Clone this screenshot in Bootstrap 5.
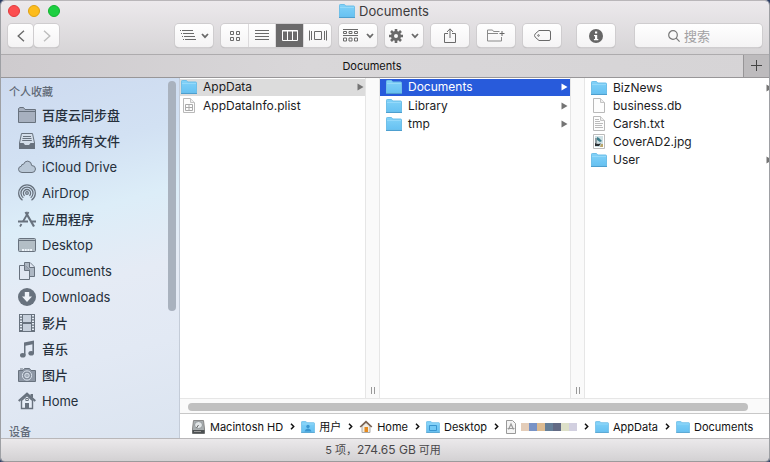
<!DOCTYPE html>
<html lang="zh-CN">
<head>
<meta charset="utf-8">
<meta name="viewport" content="width=device-width, initial-scale=1">
<title>Documents</title>
<link href="https://cdn.jsdelivr.net/npm/bootstrap@5.3.0/dist/css/bootstrap.min.css" rel="stylesheet">
<style>
body{font-family:Inter,"Noto Sans CJK SC",sans-serif;font-size:12px;line-height:18px;color:#1c1c1e;background:#2c3e66}
a{color:inherit;text-decoration:none}
svg{display:block;flex:none}
.finder{height:100vh;border-radius:5px 5px 4px 4px;border-top:1px solid #b9b6b9;border-left:1px solid #9ea0a4;border-right:1px solid #9ea0a4}
.chrome{background:linear-gradient(#ece9ec,#d6d4d6);border-bottom:1px solid #adabad}
.titlerow{display:grid;grid-template-columns:1fr auto 1fr;height:20px;padding:0 9px 0 7px}
.titletext{font-size:13px;color:#3c3a3c}
.light{width:12px;height:12px;border-radius:50%;border:1px solid;padding:0}
.light-r{background:#fc4e50;border-color:#e0393d}
.light-y{background:#fdbc1c;border-color:#dea012}
.light-g{background:#1dcf41;border-color:#11b32f}
.toolrow{padding:3px 7px 7px 7px}
.navpair{gap:1px;margin-right:108px}
.tool{width:38px;height:23px;padding:0;border:0;border-radius:4px;background:linear-gradient(#fff,#f4f3f4);box-shadow:0 0 0 1px #cfcdcf,0 1px 1px #a9a7a9;color:#6a6a6a;display:flex;align-items:center;justify-content:center;flex:none}
.nav-tool{width:25px}
.seg{border-radius:4px;box-shadow:0 0 0 1px #cfcdcf,0 1px 1px #a9a7a9;overflow:hidden}
.seg .tool{width:28px;border-radius:0;box-shadow:none;border-right:1px solid #dcdadc}
.seg .tool:nth-child(2),.seg .tool:last-child{width:27px}
.seg .tool:last-child{border-right:0}
.seg .tool.active{background:#6b6a6b;color:#fff}
.findbox{flex:0 0 127px;justify-content:flex-start;padding-left:33px}
.findbox input{border:0;background:none;outline:0;width:60px;padding:0;font-size:13px;line-height:18px;color:#555}
.findbox input::placeholder{color:#a2a1a3;opacity:1}
.tabrow{height:23px;background:linear-gradient(90deg,#cecbce,#d9d7d9 40%,#d6d4d6);border-bottom:1px solid #989698;font-size:11px;color:#111}
.tabrow .newtab{width:26px;border:0;border-left:1px solid #979597;background:#bdbbbd;color:#444;padding:0}
.side{width:179px;border-right:1px solid #c4ccd8;background:linear-gradient(165deg,#cddaef 0,#d2e1f3 22%,#dcedf8 38%,#e5ebf5 56%,#e2e9f4 75%,#dbe4f0 100%);color:#26303c;overflow:hidden}
.side h2{font-size:11px;line-height:18px;font-weight:500;color:#5f6976;margin:0;padding:5px 8px 0}
.side ul{margin:1px 0 4px}
.side li a{display:flex;align-items:center;height:26px;padding-left:17px;gap:6px;font-size:13px}
.side li a:lang(zh){font-weight:500}
.side svg{color:#68727e}
.vthumb{width:8px;height:230px;margin:3px 3px 0 0;border-radius:4px;background:#a9b2be}
.pane{flex:0 0 190px;padding-top:1px;background:#fff}
.pane-first{flex-basis:185px}
.pane-last{flex-grow:1}
.pane li a{display:flex;align-items:center;height:18px;padding:0 2px 0 6px;gap:6px}
.pane-first li a{padding:0 1px}
.pane li .arr{margin-left:auto;color:#747474}
.pane li.sel a{background:#dcdcdc;height:17px;margin-bottom:1px}
.pane li.hot a{background:#285bdb;color:#fff;height:17px;margin-bottom:1px}
.pane li.hot .arr{color:#fff}
.rail{width:15px;flex:none;background:#fafafa;border:solid #e6e6e6;border-width:0 1px;display:flex;align-items:flex-end;justify-content:center;gap:2px;padding-bottom:4px}
.rail i{width:1px;height:7px;background:#999}
.hbar{height:16px;background:#fafafa;border-top:1px solid #e6e6e6;border-bottom:1px solid #c8c8c8;padding:4px 21px 0 8px}
.hbar div{height:8px;border-radius:4px;background:#c0c0c0}
.trail{height:24px;font-size:11px;color:#111;padding:1px 0 0 11px;background:#fff;white-space:nowrap}
.trail a{display:flex;align-items:center;gap:4px}
.trail .sep{width:18px;display:flex;justify-content:center}
.redact{display:flex;height:8px}
.redact i{width:8px}
.status{height:24px;background:linear-gradient(#ebe9eb,#d3d1d3);border-top:1px solid #b9b7b9;border-bottom:1px solid #9c9a9c;font-size:11px;color:#4a484a;border-radius:0 0 4px 4px;padding-right:4px}
.status span{font-size:12px}
</style>
<script src="https://cdn.jsdelivr.net/npm/bootstrap@5.3.0/dist/js/bootstrap.bundle.min.js"></script>
</head>
<body>
<svg width="0" height="0" class="position-absolute" aria-hidden="true">
<defs>
<linearGradient id="fg" x1="0" y1="0" x2="0" y2="1"><stop offset="0" stop-color="#82d2f8"/><stop offset="1" stop-color="#66c1f2"/></linearGradient>
<symbol id="folder" viewBox="0 0 16 14"><path d="M.5 13V1.2Q.5.5 1.2.5H5.200Q5.800.5 6.200 1.200L6.600 2H14.800Q15.500 2 15.500 2.700V13Z" fill="url(#fg)" stroke="#6fbfe8"/><path d="M1 3.500H15" stroke="#94d9fa"/><path d="M0 13.500H16" stroke="#4d9fcf"/></symbol>
<symbol id="page" viewBox="0 0 12 15"><path d="M.5.5H7.500L11.500 4.500V14.500H.5Z" fill="#fdfdfd" stroke="#b9b9b9"/><path d="M7.500.5V4.500H11.500" fill="#eee" stroke="#c4c4c4"/></symbol>
<symbol id="arrow" viewBox="0 0 7 8"><path d="M.5.5 6.500 4 .5 7.500Z" fill="currentColor"/></symbol>
<symbol id="chev" viewBox="0 0 8 6"><path d="M1 1 4 4.200 7 1" fill="none" stroke="currentColor" stroke-width="1.800"/></symbol>
<symbol id="sep" viewBox="0 0 5 7"><path d="M1 .8 3.700 3.500 1 6.200" fill="none" stroke="#111" stroke-width="1.500"/></symbol>
</defs>
</svg>
<div class="finder d-flex flex-column overflow-hidden">
<header class="chrome">
<div class="titlerow align-items-center">
<div class="d-flex gap-2">
<button class="light light-r" aria-label="关闭"></button><button class="light light-y" aria-label="最小化"></button><button class="light light-g" aria-label="缩放"></button>
</div>
<div class="titletext d-flex align-items-center gap-1"><svg width="16" height="14"><use href="#folder"/></svg>Documents</div>
<div></div>
</div>
<div class="toolrow d-flex gap-2">
<div class="navpair d-flex">
<button class="tool nav-tool" aria-label="后退"><svg width="8" height="12" viewBox="0 0 8 12"><path d="M7 .7 1.200 6 7 11.300" fill="none" stroke="#6b6b6b" stroke-width="1.400"/></svg></button>
<button class="tool nav-tool" aria-label="前进"><svg width="8" height="12" viewBox="0 0 8 12"><path d="M1 .7 6.800 6 1 11.300" fill="none" stroke="#bdbdbd" stroke-width="1.400"/></svg></button>
</div>
<button class="tool gap-1" aria-label="列表选项"><svg width="17" height="11" viewBox="0 0 17 11" fill="none" stroke="currentColor"><path d="M0 .5H1M2 .5H13M1 3.500H2M3 3.500H14M2 6.500H3M4 6.500H15M3 9.500H4M5 9.500H16"/></svg><svg width="8" height="6"><use href="#chev"/></svg></button>
<div class="seg d-flex" role="group" aria-label="显示方式">
<button class="tool" aria-label="图标"><svg width="10" height="10" viewBox="0 0 10 10" fill="none" stroke="currentColor"><path d="M.5.5h3v3h-3zM6.500.5h3v3h-3zM.5 6.500h3v3h-3zM6.500 6.500h3v3h-3z"/></svg></button>
<button class="tool" aria-label="列表"><svg width="14" height="11" viewBox="0 0 14 11" stroke="currentColor"><path d="M0 .5H14M0 3.500H14M0 6.500H14M0 9.500H14"/></svg></button>
<button class="tool active" aria-label="分栏"><svg width="16" height="11" viewBox="0 0 16 11" fill="none" stroke="currentColor"><path d="M.5.5h15v10H.5zM5.500.5v10M10.500.5v10"/><path d="M0 1H16"/></svg></button>
<button class="tool" aria-label="画廊"><svg width="18" height="11" viewBox="0 0 18 11" fill="none" stroke="currentColor"><path d="M5.500 1.500h7v8h-7zM.5.500v10M2.500 1v9M17.500.500v10M15.500 1v9"/></svg></button>
</div>
<button class="tool gap-2" aria-label="排列"><svg width="15" height="13" viewBox="0 0 15 13" fill="none" stroke="currentColor"><path d="M0 .5H15M0 6.500H15M.5 2.500h3v2h-3zM6 2.500h3v2H6zM11.500 2.500h3v2h-3zM.5 9h3v3h-3zM6 9h3v3H6zM11.500 9h3v3h-3z"/></svg><svg width="8" height="6"><use href="#chev"/></svg></button>
<button class="tool gap-2" aria-label="操作"><svg width="14" height="14" viewBox="-7 -7 14 14"><circle r="3.500" fill="none" stroke="currentColor" stroke-width="3"/><path d="M0-7V-4M0 4V7M-7 0H-4M4 0H7M-5-5-3-3M3 3 5 5M-5 5-3 3M3-3 5-5" stroke="currentColor" stroke-width="2.600"/></svg><svg width="8" height="6"><use href="#chev"/></svg></button>
<button class="tool" aria-label="共享"><svg width="12" height="16" viewBox="0 0 12 16" fill="none" stroke="currentColor"><path d="M4 5.500H.5v9h11v-9H8M6 10V1M3 4 6 .8 9 4"/></svg></button>
<button class="tool" aria-label="新建文件夹"><svg width="18" height="13" viewBox="0 0 18 13" fill="none" stroke="#8a8a8a"><path d="M12.500 2.500H6.500L5.500 1H.5v11h14V8M.5 4.500H11"/><path d="M15 2v5M12.500 4.500h5" stroke="#666"/></svg></button>
<button class="tool" aria-label="标记"><svg width="17" height="11" viewBox="0 0 17 11" fill="none" stroke="currentColor"><path d="M5 .5H15Q16.500.5 16.500 2V9Q16.500 10.500 15 10.500H5L1.200 7.200Q-.2 5.500 1.200 3.800Z"/><circle cx="4.500" cy="5.500" r=".8"/></svg></button>
<button class="tool ms-2" aria-label="信息"><svg width="14" height="14" viewBox="0 0 14 14"><circle cx="7" cy="7" r="7" fill="#666"/><path d="M6 2.500h2.200v2H6zM5 6H8.200V10H9.300V11.200H4.900V10H6V7.200H5z" fill="#fff"/></svg></button>
<label class="tool findbox gap-1 ms-auto"><svg width="12" height="12" viewBox="0 0 12 12" fill="none" stroke="#777" stroke-width="1.200"><circle cx="5" cy="5" r="4.300"/><path d="M8.200 8.200 11.600 11.600"/></svg><input type="text" placeholder="搜索" aria-label="搜索"></label>
</div>
</header>
<div class="tabrow d-flex">
<a href="#" class="flex-fill d-flex align-items-center justify-content-center">Documents</a>
<button class="newtab d-flex align-items-center justify-content-center" aria-label="新标签页"><svg width="11" height="11" viewBox="0 0 11 11"><path d="M0 5.500H11M5.500 0V11" stroke="#444"/></svg></button>
</div>
<div class="d-flex flex-fill overflow-hidden" style="min-height:0">
<nav class="side d-flex flex-shrink-0">
<div class="flex-fill">
<h2>个人收藏</h2>
<ul class="list-unstyled">
<li><a href="#"><svg width="18" height="18" viewBox="0 0 18 18"><path d="M.5 16.500V2.500L2 1.500H5.500L7 3.500H17.500V16.500Z" fill="#a7b0bf" stroke="currentColor"/><path d="M.5 5.500H17.500" stroke="currentColor"/></svg>百度云同步盘</a></li>
<li><a href="#"><svg width="18" height="18" viewBox="0 0 18 18"><path d="M3.500 1.500H14.500L16.500 11V16.500H1.500V11Z" fill="#d4deea" stroke="currentColor"/><path d="M5 4.500h8M4.500 6.500h9M4.200 8.500h9.600" stroke="currentColor"/><path d="M1 11H5.500L7 13H11L12.500 11H17V17H1Z" fill="currentColor"/></svg>我的所有文件</a></li>
<li><a href="#" lang="en"><svg width="18" height="18" viewBox="0 0 18 18"><path d="M4 14.500Q.5 14.300.5 11.300.6 8.500 3.300 8.200 3.300 6 5.600 6.200 6.700 3 9.800 3.100 13.500 3.500 13.700 7.500 17.500 7.500 17.500 11 17.300 14.500 14 14.500Z" fill="#b9c7d6" stroke="currentColor"/></svg>iCloud Drive</a></li>
<li><a href="#" lang="en"><svg width="18" height="18" viewBox="0 0 18 18" fill="none" stroke="currentColor" stroke-width="1.300"><path d="M4.500 16.200A8.300 8.300 0 1 1 13.500 16.200M5.300 13.800A6 6 0 1 1 12.700 13.800M6.600 11.800A3.600 3.600 0 1 1 11.400 11.800"/><circle cx="9" cy="9" r="1.300"/></svg>AirDrop</a></li>
<li><a href="#"><svg width="18" height="18" viewBox="0 0 18 18" fill="none" stroke="currentColor"><path d="M7.500 2 16 16.500" stroke-width="2.200"/><path d="M10.500 2 5 11.500M3.500 14 2 16.500" stroke-width="1.800"/><path d="M0 11.500H10M13.500 11.500H18" stroke-width="2"/></svg>应用程序</a></li>
<li><a href="#" lang="en"><svg width="18" height="18" viewBox="0 0 18 18"><rect x=".5" y="2.500" width="17" height="13" rx="1" fill="#b3bec6" stroke="currentColor"/><path d="M1 4.500H17" stroke="currentColor"/><path d="M4 14h10" stroke="#eef4fa" stroke-width="2" stroke-dasharray="2 .7"/></svg>Desktop</a></li>
<li><a href="#" lang="en"><svg width="18" height="18" viewBox="0 0 18 18" fill="#dfe6f1" stroke="currentColor"><path d="M6.500.5H12L16.500 5V14.500H6.500Z" fill="#aeb8c4"/><path d="M11.500.5V5.500H16.500"/><path d="M1.500 3.500H7L11.500 8V17.500H1.500Z"/><path d="M6.500 3.500V8.500H11.500" fill="#9ea8b5"/></svg>Documents</a></li>
<li><a href="#" lang="en"><svg width="18" height="18" viewBox="0 0 18 18"><circle cx="9" cy="9" r="9" fill="currentColor"/><path d="M6.800 4H11.200V8.500H14L9 14 4 8.500H6.800Z" fill="#eef2f8"/></svg>Downloads</a></li>
<li><a href="#"><svg width="18" height="18" viewBox="0 0 18 18"><path d="M1 0H17V18H1Z" fill="currentColor"/><path d="M5 1h8v7H5zM5 10h8v7H5z" fill="#c7d0dc"/><path d="M3 1V17M15 1V17" stroke="#e6edf6" stroke-width="2" stroke-dasharray="1.500 1.200"/></svg>影片</a></li>
<li><a href="#"><svg width="18" height="18" viewBox="0 0 18 18"><path d="M6 2.500 16 .5V4L7.500 5.800V15H6Z" fill="currentColor"/><path d="M15.200 3V13" stroke="currentColor" stroke-width="1.600"/><ellipse cx="4.800" cy="15.200" rx="2.800" ry="2.300" fill="currentColor"/><ellipse cx="13.200" cy="13.200" rx="2.800" ry="2.300" fill="currentColor"/></svg>音乐</a></li>
<li><a href="#"><svg width="18" height="18" viewBox="0 0 18 18"><path d="M.5 4.500H5L6.500 2.500H11.500L13 4.500H17.500V15.500H.5Z" fill="#8e98a6" stroke="currentColor"/><path d="M2 3h3" stroke="currentColor"/><circle cx="9" cy="9.500" r="4.600" fill="#7f8997" stroke="#dce4ee"/><circle cx="9" cy="9.500" r="2.300" fill="#a5afbc" stroke="#dce4ee"/></svg>图片</a></li>
<li><a href="#" lang="en"><svg width="18" height="18" viewBox="0 0 18 18"><path d="M3.500 8.500 9 3.500 14.500 8.500V16.500H3.500Z" fill="#e6edf6" stroke="currentColor" stroke-width="1.400"/><path d="M12.500 2H15V6L12.500 4Z" fill="currentColor"/><path d="M.7 9 9 1.700 17.300 9" fill="none" stroke="currentColor" stroke-width="2"/><path d="M7 11h4v6H7z" fill="currentColor"/><path d="M7.800 6.500h2.500v2H7.800z" fill="#fff" stroke="currentColor"/></svg>Home</a></li>
</ul>
<h2>设备</h2>
</div>
<div class="vthumb"></div>
</nav>
<main class="d-flex flex-column flex-fill" style="min-width:0">
<div class="d-flex flex-fill overflow-hidden bg-white">
<ul class="pane pane-first list-unstyled m-0">
<li class="sel"><a href="#"><svg width="16" height="14"><use href="#folder"/></svg>AppData<svg class="arr" width="7" height="8"><use href="#arrow"/></svg></a></li>
<li><a href="#"><svg width="16" height="15" viewBox="-2 0 16 15"><use href="#page" width="12" height="15"/><path d="M2.500 6.500h7v6h-7zM2.500 9.500h7M6 6.500v6" fill="none" stroke="#aaa"/></svg>AppDataInfo.plist</a></li>
</ul>
<div class="rail"><i></i><i></i></div>
<ul class="pane list-unstyled m-0">
<li class="hot"><a href="#"><svg width="16" height="14"><use href="#folder"/></svg>Documents<svg class="arr" width="7" height="8"><use href="#arrow"/></svg></a></li>
<li><a href="#"><svg width="16" height="14"><use href="#folder"/></svg>Library<svg class="arr" width="7" height="8"><use href="#arrow"/></svg></a></li>
<li><a href="#"><svg width="16" height="14"><use href="#folder"/></svg>tmp<svg class="arr" width="7" height="8"><use href="#arrow"/></svg></a></li>
</ul>
<div class="rail"><i></i><i></i></div>
<ul class="pane pane-last list-unstyled m-0">
<li><a href="#"><svg width="16" height="14"><use href="#folder"/></svg>BizNews<svg class="arr" width="7" height="8"><use href="#arrow"/></svg></a></li>
<li><a href="#"><svg width="16" height="15" viewBox="-2 0 16 15"><use href="#page" width="12" height="15"/></svg>business.db</a></li>
<li><a href="#"><svg width="16" height="15" viewBox="-2 0 16 15"><use href="#page" width="12" height="15"/><path d="M2 3.500h4M2 5.500h5M2 7.500h8M2 9.500h7M2 11.500h8" stroke="#bbb"/></svg>Carsh.txt</a></li>
<li><a href="#"><svg width="16" height="15" viewBox="-2 0 16 15"><path d="M.5.500h11v14H.5z" fill="#fff" stroke="#bbb"/><path d="M2 2h8v11H2z" fill="#cfe0e4"/><path d="M4 3 6 4 9 7 7 8 4 6Z" fill="#3f7f8c"/><path d="M2 12V9L5 10 8 9.500 6 12Z" fill="#2a2f33"/><path d="M3 4V9" stroke="#46555c"/><path d="M8 10h2v3H7z" fill="#b8a56a"/></svg>CoverAD2.jpg</a></li>
<li><a href="#"><svg width="16" height="14"><use href="#folder"/></svg>User<svg class="arr" width="7" height="8"><use href="#arrow"/></svg></a></li>
</ul>
</div>
<div class="hbar"><div></div></div>
<nav class="trail d-flex align-items-center" aria-label="路径">
<a href="#"><svg width="15" height="14" viewBox="0 0 15 14"><path d="M2.500.5H12.500L13.500 9V13.500H1.500V9Z" fill="#a9aeb0" stroke="#888"/><path d="M1.500 10h12v3.500h-12z" fill="#4c5052"/><ellipse cx="7.500" cy="5" rx="4" ry="3.500" fill="#e1e5e7" stroke="#93999c"/><path d="M7.500 5 5.500 8" stroke="#666"/><path d="M3 11.500h7" stroke="#999"/></svg>Macintosh HD</a>
<span class="sep"><svg width="5" height="7"><use href="#sep"/></svg></span>
<a href="#"><svg width="14" height="12"><use href="#folder"/><circle cx="7" cy="5.500" r="1.700" fill="#3995cf"/><path d="M3.500 10.500Q4 8 7 7.500 10 8 10.500 10.500Z" fill="#3995cf"/></svg>用户</a>
<span class="sep"><svg width="5" height="7"><use href="#sep"/></svg></span>
<a href="#"><svg width="14" height="13" viewBox="0 0 14 13"><path d="M3 6 7 2.500 11 6V12.500H3Z" fill="#f1ece2" stroke="#aaa"/><path d="M1.200 7 7 1.600 12.800 7" fill="none" stroke="#7a6252" stroke-width="1.700"/><path d="M5.500 7h3.500v5H5.500z" fill="#e58a1f"/></svg>Home</a>
<span class="sep"><svg width="5" height="7"><use href="#sep"/></svg></span>
<a href="#"><svg width="14" height="12"><use href="#folder"/><path d="M3.500 4.500h7v5h-7z" fill="#72c9f5" stroke="#3995cf"/></svg>Desktop</a>
<span class="sep"><svg width="5" height="7"><use href="#sep"/></svg></span>
<a href="#" aria-label="项目"><svg width="12" height="14" viewBox="0 0 12 14"><path d="M1.500.500h6l3 3v10h-9z" fill="#f4f4f4" stroke="#999"/><path d="M3.500 9.500 6 4 8.500 9.500M2.500 8.500h7" fill="none" stroke="#999" stroke-width="1.200"/></svg><span class="redact"><i style="background:#e4cdb9"></i><i style="background:#7893c6"></i><i style="background:#dcbb91"></i><i style="background:#657f98"></i><i style="background:#626a84"></i><i style="background:#dde0c8"></i><i style="background:#d2d0e0"></i></span></a>
<span class="sep"><svg width="5" height="7"><use href="#sep"/></svg></span>
<a href="#"><svg width="14" height="12"><use href="#folder"/></svg>AppData</a>
<span class="sep"><svg width="5" height="7"><use href="#sep"/></svg></span>
<a href="#"><svg width="14" height="12"><use href="#folder"/></svg>Documents</a>
</nav>
</main>
</div>
<footer class="status d-flex align-items-center justify-content-center"><div>5 项，<span>274.65 GB</span> 可用</div></footer>
</div>
</body>
</html>
